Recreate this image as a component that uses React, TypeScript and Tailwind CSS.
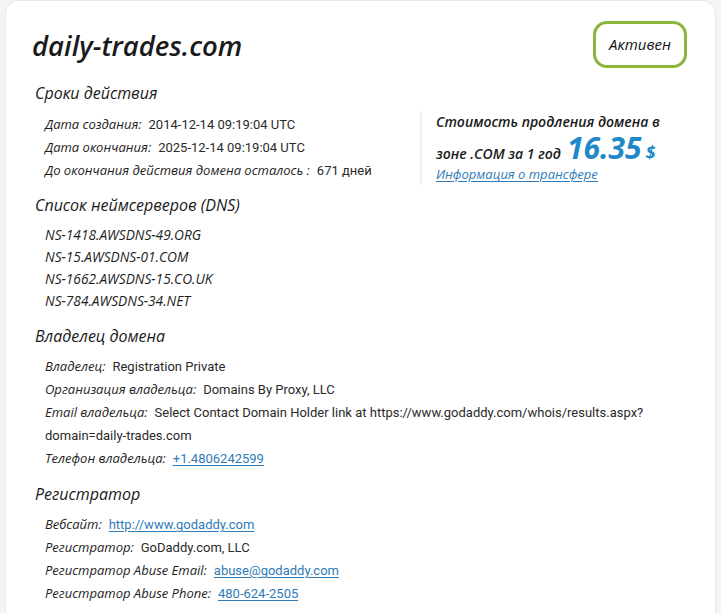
import type { ReactNode } from "react";

const label = "italic text-[#1e1e1e] [font-family:'Open_Sans',sans-serif]";
const link = "text-[#2f7bb8] underline underline-offset-2";
const plain = "text-[13px] leading-[23px] text-[#2a2a2a] [font-family:Roboto,sans-serif]";

function Heading({ children }: { children: ReactNode }) {
  return (
    <h2 className="h-6 pl-[3px] text-[16px] leading-6 font-medium italic text-[#1a1a1a] [font-family:'Open_Sans',sans-serif]">
      {children}
    </h2>
  );
}

function Row({ name, children }: { name: string; children: ReactNode }) {
  return (
    <div className={plain}>
      <span className={`mr-[7px] ${label}`}>{name}:</span>
      {children}
    </div>
  );
}

export default function App() {
  const servers = [
    "NS-1418.AWSDNS-49.ORG",
    "NS-15.AWSDNS-01.COM",
    "NS-1662.AWSDNS-15.CO.UK",
    "NS-784.AWSDNS-34.NET",
  ];

  return (
    <div className="min-h-screen bg-[#f4f4f4] px-[5px]">
      <div className="min-h-[613px] rounded-t-[14px] border border-b-0 border-[#e9e9e9] bg-white pt-[20px] pr-[28px] pl-[26px]">
        {/* domain + status */}
        <div className="flex items-start justify-between">
          <h1 className="mt-[8px] text-[27.5px] leading-[34px] font-semibold italic text-[#1a1a1a] [font-family:'Open_Sans',sans-serif]">
            daily-trades.com
          </h1>
          <div className="flex h-[47px] w-[94px] items-center justify-center rounded-[14px] border-[3px] border-[#8cb43a] text-[15px] font-medium italic text-[#111] [font-family:'Open_Sans',sans-serif]">
            Активен
          </div>
        </div>

        {/* validity */}
        <div className="mt-[13px]">
          <Heading>Сроки действия</Heading>
          <div className="mt-[6px] flex">
            <div className="w-[388px] pt-[2px] pl-[13px]">
              <Row name="Дата создания">2014-12-14 09:19:04 UTC</Row>
              <Row name="Дата окончания">2025-12-14 09:19:04 UTC</Row>
              <Row name="До окончания действия домена осталось ">671 дней</Row>
            </div>
            <div className="w-[250px] border-l-2 border-[#f0f0f0] pl-[14px]">
              <p className="text-[14px] leading-[22px] font-semibold italic text-[#1a1a1a] [font-family:'Open_Sans',sans-serif]">
                Стоимость продления домена в
              </p>
              <p className="flex h-[30px] items-baseline text-[14px] font-semibold italic text-[#1a1a1a] [font-family:'Open_Sans',sans-serif]">
                <span>зоне .COM за 1 год</span>
                <span className="ml-[6px] text-[30px] leading-[30px] font-bold text-[#1f88c7]">16.35</span>
                <span className="ml-[4px] text-[18px] font-bold text-[#1f88c7]">$</span>
              </p>
              <a href="#" className="block text-[13px] leading-[22px] italic text-[#2f7bb8] underline underline-offset-2 [font-family:'Open_Sans',sans-serif]">
                Информация о трансфере
              </a>
            </div>
          </div>
        </div>

        {/* name servers */}
        <div className="mt-[8px]">
          <Heading>Список неймсерверов (DNS)</Heading>
          <div className="mt-[7px] pl-[13px]">
            {servers.map((s) => (
              <div key={s} className={`text-[13.7px] leading-[22px] ${label}`}>
                {s}
              </div>
            ))}
          </div>
        </div>

        {/* owner */}
        <div className="mt-[12px]">
          <Heading>Владелец домена</Heading>
          <div className="mt-[7px] pl-[13px]">
            <Row name="Владелец">Registration Private</Row>
            <Row name="Организация владельца">Domains By Proxy, LLC</Row>
            <Row name="Email владельца">
              Select Contact Domain Holder link at https://www.godaddy.com/whois/results.aspx?
            </Row>
            <div className={plain}>domain=daily-trades.com</div>
            <Row name="Телефон владельца">
              <a href="#" className={link}>+1.4806242599</a>
            </Row>
          </div>
        </div>

        {/* registrar */}
        <div className="mt-[12px]">
          <Heading>Регистратор</Heading>
          <div className="mt-[7px] pl-[13px]">
            <Row name="Вебсайт">
              <a href="#" className={link}>http://www.godaddy.com</a>
            </Row>
            <Row name="Регистратор">GoDaddy.com, LLC</Row>
            <Row name="Регистратор Abuse Email">
              <a href="#" className={link}>abuse@godaddy.com</a>
            </Row>
            <Row name="Регистратор Abuse Phone">
              <a href="#" className={link}>480-624-2505</a>
            </Row>
          </div>
        </div>
      </div>
    </div>
  );
}
